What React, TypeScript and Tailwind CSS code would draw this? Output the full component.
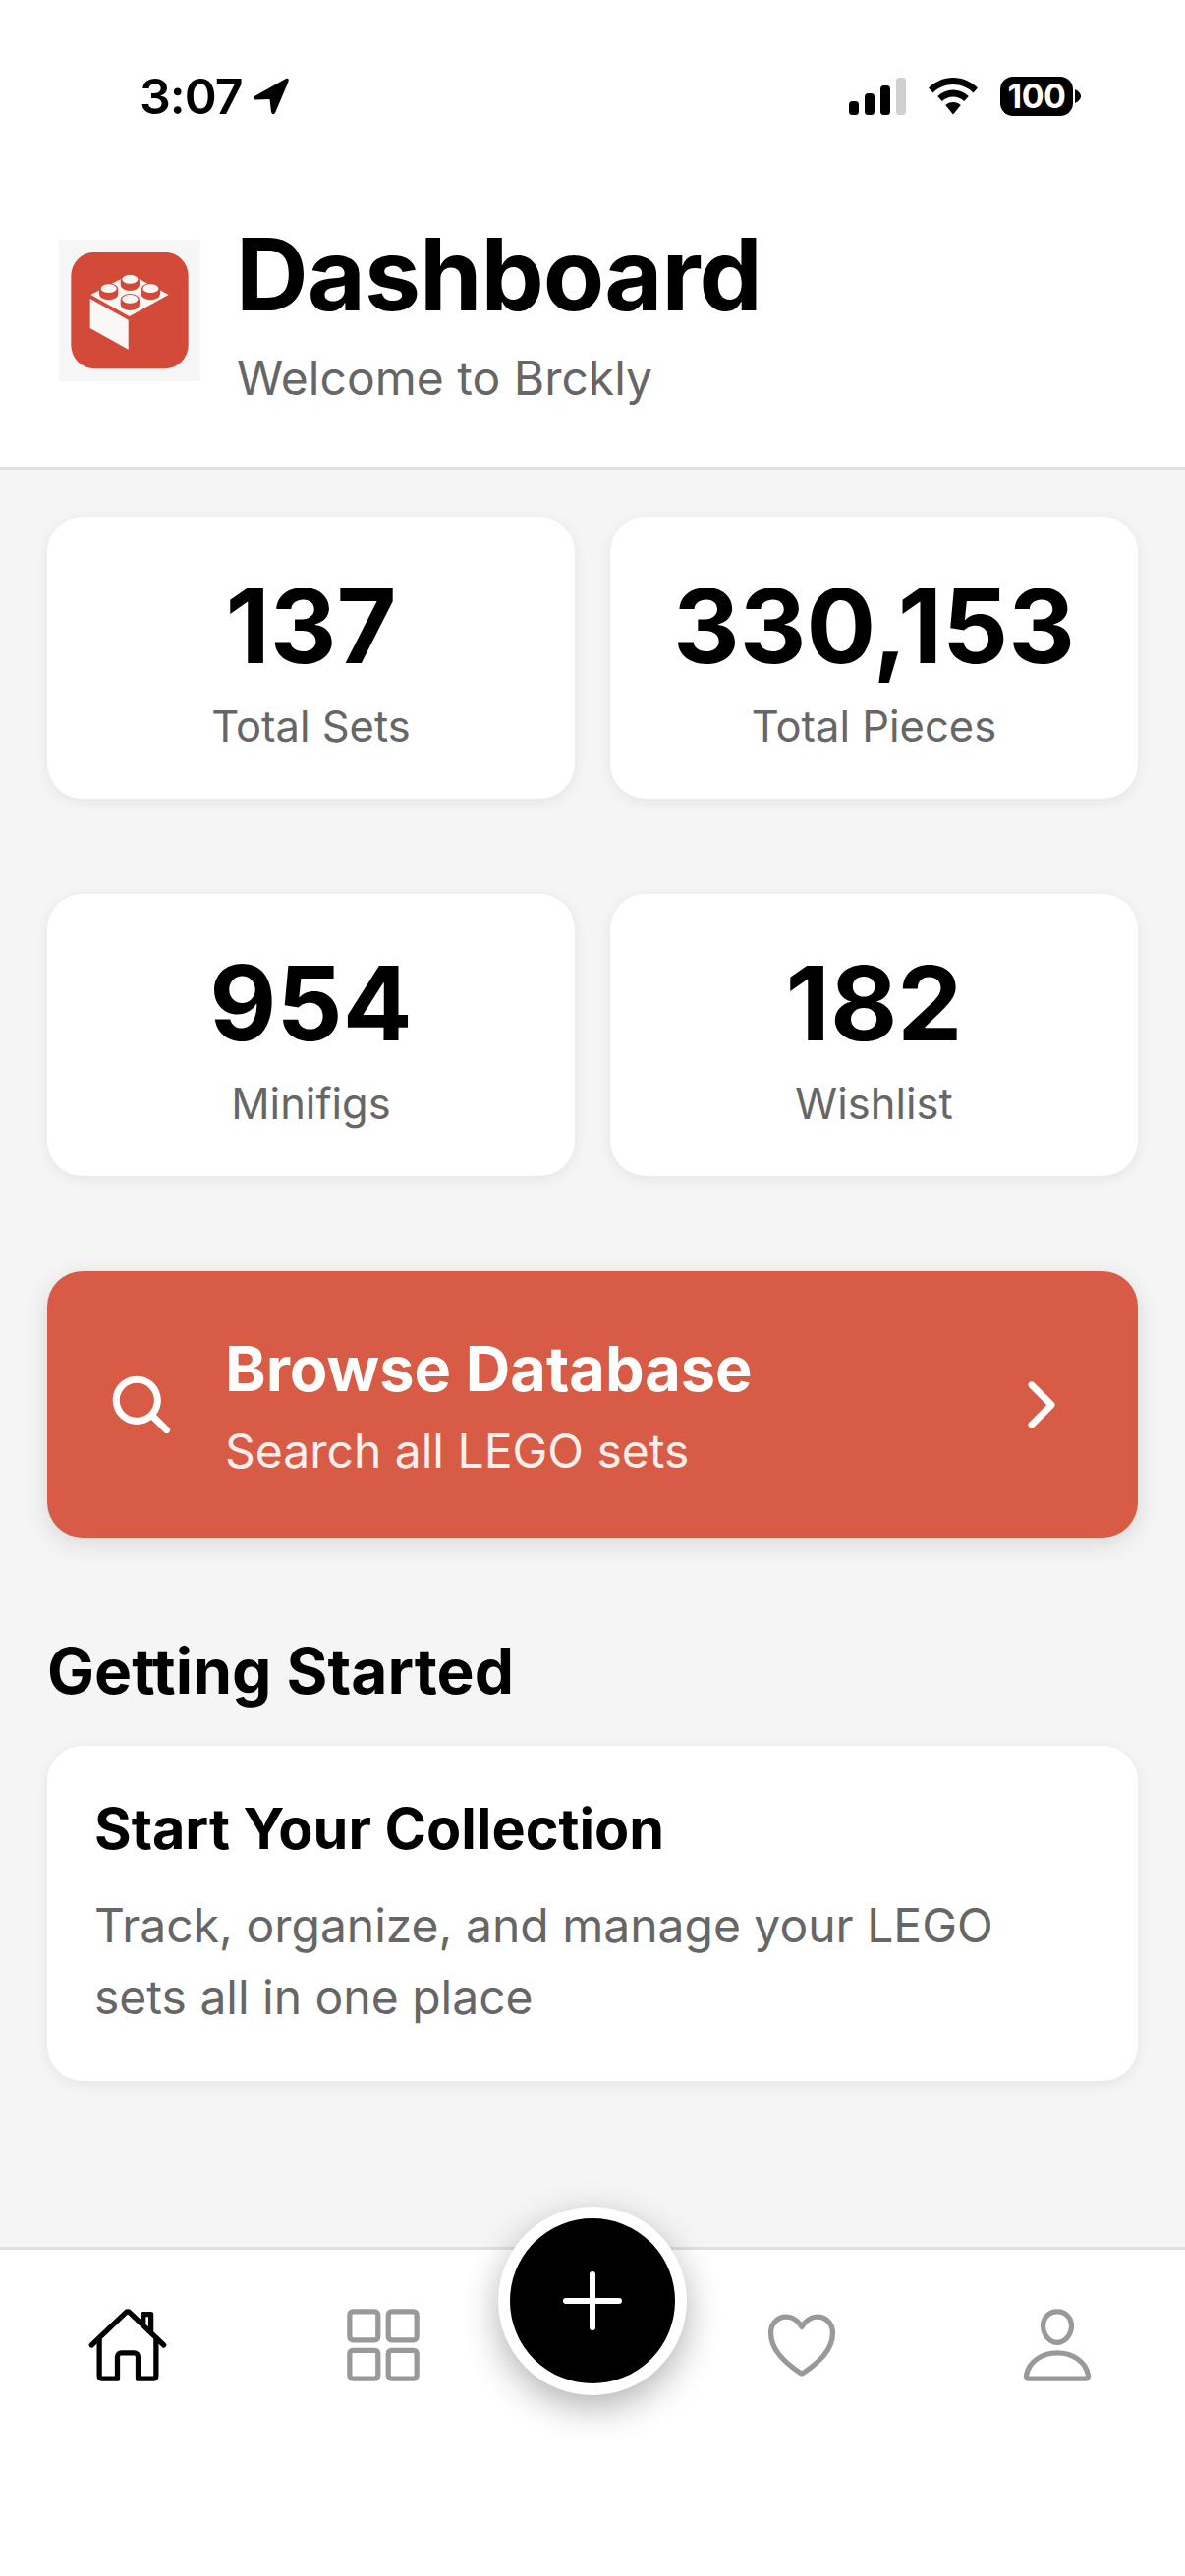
import {
  IoAdd,
  IoChevronForward,
  IoGridOutline,
  IoHeartOutline,
  IoHomeOutline,
  IoPersonOutline,
  IoSearch,
} from "react-icons/io5";

const stats = [
  [
    { value: "137", label: "Total Sets" },
    { value: "330,153", label: "Total Pieces" },
  ],
  [
    { value: "954", label: "Minifigs" },
    { value: "182", label: "Wishlist" },
  ],
];

function StatusBar() {
  return (
    <div className="flex h-[196px] items-center justify-between pl-[142px] pr-[106px]">
      <div className="flex items-center gap-[9px]">
        <span className="text-[50px] leading-none font-semibold tracking-[-1px] text-black">3:07</span>
        <svg width="40" height="42" viewBox="0 0 40 42">
          <path
            d="M3 21 L35 3 Q38.5 2 37.5 6 L24 38 Q21.5 41 20 37 L18.5 24 L4 24.5 Q0 23 3 21Z"
            fill="#000"
          />
        </svg>
      </div>
      <div className="flex items-center">
        <svg width="60" height="38" viewBox="0 0 60 38" className="mr-[20px]">
          <rect x="0" y="24" width="10" height="14" rx="3.5" fill="#000" />
          <rect x="16" y="16" width="10" height="22" rx="3.5" fill="#000" />
          <rect x="32" y="8" width="10" height="30" rx="3.5" fill="#000" />
          <rect x="48" y="0" width="10" height="38" rx="3.5" fill="#cfcfcf" />
        </svg>
        <svg width="52" height="38" viewBox="0 0 52 38" className="mr-[22px]">
          <path
            d="M26 0 C35.5 0 44 3.6 51 10.5 L46.5 15.5 C41 10 34 7 26 7 C18 7 11 10 5.5 15.5 L1 10.5 C8 3.6 16.5 0 26 0Z"
            fill="#000"
          />
          <path
            d="M26 12.5 C32 12.5 37.4 14.8 41.8 19 L37.2 24 C34 21 30.2 19.4 26 19.4 C21.8 19.4 18 21 14.8 24 L10.2 19 C14.6 14.8 20 12.5 26 12.5Z"
            fill="#000"
          />
          <path
            d="M26 25 C29 25 31.6 26 33.8 28 L26 37.5 L18.2 28 C20.4 26 23 25 26 25Z"
            fill="#000"
          />
        </svg>
        <div className="flex h-[40px] w-[74px] items-center justify-center rounded-[13px] bg-black">
          <span className="text-[34px] leading-none font-bold tracking-[-0.5px] text-white">100</span>
        </div>
        <svg width="6" height="14" viewBox="0 0 6 14" className="ml-[2px]">
          <path d="M0 0 Q6 3 6 7 Q6 11 0 14Z" fill="#000" />
        </svg>
      </div>
    </div>
  );
}

function BrickLogo() {
  return (
    <svg width="144" height="144" viewBox="60 72 432 432" className="shrink-0">
      <rect x="60" y="72" width="432" height="432" fill="#f6f6f6" />
      <rect x="97" y="110" width="358" height="356" rx="72" fill="#d34a39" />
      <path d="M155 252 L272 317 L272 407 L155 342Z" fill="#faf8f6" />
      <path d="M157 240 L277 178 L395 240 L275 306Z" fill="#faf8f6" />
      {[
        [277, 200],
        [212, 228],
        [340, 228],
        [277, 260],
      ].map(([cx, cy]) => (
        <g key={`${cx}-${cy}`}>
          <path
            d={`M${cx - 29} ${cy - 4} V${cy + 10} A29 18 0 0 0 ${cx + 29} ${cy + 10} V${cy - 4}Z`}
            fill="#d34a39"
          />
          <ellipse cx={cx} cy={cy - 5} rx="29" ry="18" fill="#d34a39" />
          <ellipse cx={cx} cy={cy - 7} rx="24" ry="13" fill="#faf8f6" />
        </g>
      ))}
    </svg>
  );
}

function StatCard({ value, label }: { value: string; label: string }) {
  return (
    <div className="flex h-[287px] flex-1 flex-col items-center rounded-[36px] bg-white pt-[50px] shadow-[0_3px_14px_rgba(0,0,0,0.07)]">
      <div className="text-[105px] leading-[122px] font-bold text-black">{value}</div>
      <div className="mt-[12px] text-[43.5px] leading-[58px] text-[#666666]">{label}</div>
    </div>
  );
}

export default function App() {
  return (
    <div className="relative flex h-[2622px] w-[1206px] flex-col bg-[#f5f5f5] font-['Inter',sans-serif]">
      <header className="h-[478px] shrink-0 border-b-[3px] border-[#e0e0e0] bg-white">
        <StatusBar />
        <div className="flex items-start gap-[36px] pl-[60px] pt-[48px]">
          <BrickLogo />
          <div className="-mt-[26px]">
            <h1 className="text-[102px] leading-[122px] font-bold tracking-[-1px] text-black">Dashboard</h1>
            <p className="ml-[1px] mt-[13px] text-[48px] leading-[64px] text-[#666666]">Welcome to Brckly</p>
          </div>
        </div>
      </header>

      <main className="flex flex-1 flex-col px-[48px] pt-[48px]">
        <div className="flex flex-col gap-[97px]">
          {stats.map((row) => (
            <div key={row[0].label} className="flex gap-[36px]">
              {row.map((stat) => (
                <StatCard key={stat.label} value={stat.value} label={stat.label} />
              ))}
            </div>
          ))}
        </div>

        <div className="mt-[97px] flex h-[271px] items-center rounded-[36px] bg-[#d75b45] pl-[60px] pr-[62px] shadow-[0_6px_24px_rgba(0,0,0,0.12)]">
          <IoSearch className="shrink-0 text-[72px] text-white" />
          <div className="ml-[49px] flex-1 pt-[5px]">
            <div className="text-[63px] leading-[76px] font-bold text-white">Browse Database</div>
            <div className="mt-[14px] text-[48px] leading-[64px] text-white/90">Search all LEGO sets</div>
          </div>
          <IoChevronForward className="shrink-0 text-[72px] text-white" />
        </div>

        <h2 className="mt-[98px] text-[64px] leading-[76px] font-bold text-black">Getting Started</h2>

        <div className="mt-[38px] h-[341px] rounded-[36px] bg-white px-[48px] pt-[52px] shadow-[0_3px_14px_rgba(0,0,0,0.07)]">
          <h3 className="text-[57.5px] leading-[64px] font-bold text-black">Start Your Collection</h3>
          <p className="mt-[30px] text-[48px] leading-[73px] text-[#666666]">
            Track, organize, and manage your LEGO sets all in one place
          </p>
        </div>
      </main>

      <nav className="flex h-[335px] shrink-0 border-t-[3px] border-[#e0e0e0] bg-white pt-[55px]">
        <div className="flex h-[84px] w-[260px] justify-center">
          <IoHomeOutline className="text-[84px] text-black" />
        </div>
        <div className="flex h-[84px] w-[260px] justify-center">
          <IoGridOutline className="text-[84px] text-[#999999]" />
        </div>
        <div className="w-[166px]" />
        <div className="flex h-[84px] w-[260px] justify-center">
          <IoHeartOutline className="text-[84px] text-[#999999]" />
        </div>
        <div className="flex h-[84px] w-[260px] justify-center">
          <IoPersonOutline className="text-[84px] text-[#999999]" />
        </div>
      </nav>

      <button className="absolute left-[507px] top-[2246px] flex h-[192px] w-[192px] items-center justify-center rounded-full border-[12px] border-white bg-black shadow-[0_12px_36px_rgba(0,0,0,0.3)]">
        <IoAdd className="text-[96px] text-white" />
      </button>
    </div>
  );
}
